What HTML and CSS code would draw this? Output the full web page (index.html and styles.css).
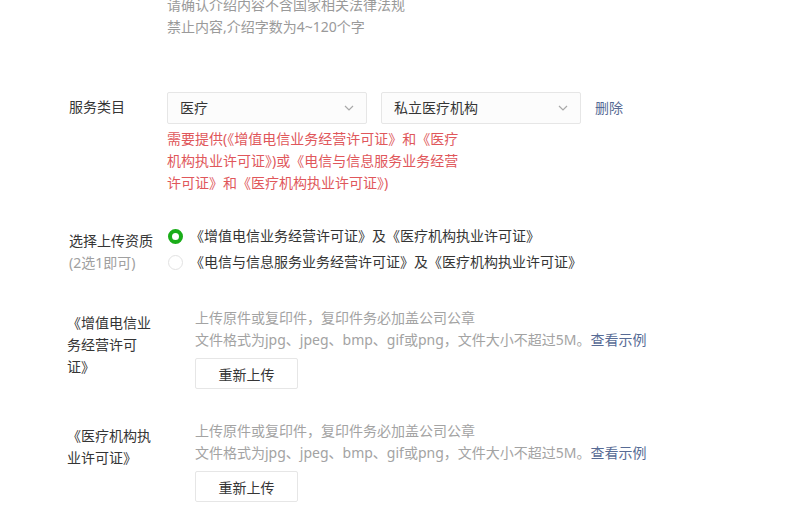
FILE: index.html
```html
<!DOCTYPE html>
<html lang="zh-CN">
  <head>
    <meta charset="UTF-8" />
    <title>服务类目设置</title>
    <link rel="stylesheet" href="styles.css">
  </head>
  <body>
    <div class="page">
      <div class="desc">
        <p>请确认介绍内容不含国家相关法律法规</p>
        <p>禁止内容,介绍字数为4~120个字</p>
      </div>

      <div class="row category">
        <div class="label">服务类目</div>
        <div class="field">
          <div class="selects">
            <div class="select">
              <span>医疗</span>
              <svg class="arrow" width="10" height="6" viewBox="0 0 10 6"><path d="M1 1l4 4 4-4" fill="none" stroke="#a9a9a9" stroke-width="1.2"/></svg>
            </div>
            <div class="select">
              <span>私立医疗机构</span>
              <svg class="arrow" width="10" height="6" viewBox="0 0 10 6"><path d="M1 1l4 4 4-4" fill="none" stroke="#a9a9a9" stroke-width="1.2"/></svg>
            </div>
            <a class="link">删除</a>
          </div>
          <p class="warn">需要提供(《增值电信业务经营许可证》和《医疗<br>机构执业许可证》)或《电信与信息服务业务经营<br>许可证》和《医疗机构执业许可证》)</p>
        </div>
      </div>

      <div class="row qualify">
        <div class="label">选择上传资质<br><span class="sub">(2选1即可)</span></div>
        <div class="field">
          <label class="radio checked"><i></i>《增值电信业务经营许可证》及《医疗机构执业许可证》</label>
          <label class="radio"><i></i>《电信与信息服务业务经营许可证》及《医疗机构执业许可证》</label>
        </div>
      </div>

      <div class="upload">
        <div class="upload-label">《增值电信业务经营许可证》</div>
        <div class="upload-body">
          <p class="hint">上传原件或复印件，复印件务必加盖公司公章</p>
          <p class="hint">文件格式为jpg、jpeg、bmp、gif或png，文件大小不超过5M。<a class="link">查看示例</a></p>
          <button class="btn">重新上传</button>
        </div>
      </div>

      <div class="upload">
        <div class="upload-label">《医疗机构执业许可证》</div>
        <div class="upload-body">
          <p class="hint">上传原件或复印件，复印件务必加盖公司公章</p>
          <p class="hint">文件格式为jpg、jpeg、bmp、gif或png，文件大小不超过5M。<a class="link">查看示例</a></p>
          <button class="btn">重新上传</button>
        </div>
      </div>
    </div>
  </body>
</html>
```

FILE: styles.css
```css
* {
  margin: 0;
  padding: 0;
  box-sizing: border-box;
}

body {
  font-family: "Noto Sans", "Noto Sans CJK SC", sans-serif;
  font-size: 14px;
  line-height: 22px;
  color: #353535;
  background: #fff;
  overflow: hidden;
}

.page {
  padding-left: 69px;
  margin-top: -6px;
}

.desc {
  padding-left: 98px;
  color: #9a9a9a;
}

.row {
  display: flex;
}

.label {
  width: 98px;
  flex-shrink: 0;
}

.category {
  margin-top: 54px;
}

.category .label {
  padding-top: 4px;
}

.selects {
  display: flex;
  align-items: center;
  gap: 14px;
}

.select {
  width: 200px;
  height: 32px;
  border: 1px solid #e6e6e6;
  border-radius: 2px;
  background: #fcfcfc;
  display: flex;
  align-items: center;
  justify-content: space-between;
  padding: 0 12px;
  color: #353535;
}

.link {
  color: #576b95;
  cursor: pointer;
}

.warn {
  margin-top: 4px;
  color: #e0575b;
}

.qualify {
  margin-top: 29px;
}

.qualify .label {
  padding-top: 7px;
}

.sub {
  color: #a0a0a0;
}

.radio {
  display: flex;
  align-items: center;
  height: 26px;
  gap: 7px;
  color: #353535;
}

.radio i {
  width: 15px;
  height: 15px;
  border-radius: 50%;
  border: 1px solid #e2e2e2;
  background: #fff;
  margin-left: 1px;
}

.radio.checked i {
  border: 4px solid #1aad19;
}

.upload {
  display: flex;
  margin-top: 32px;
}

.upload + .upload {
  margin-top: 31px;
}

.upload-label {
  width: 90px;
  margin-right: 38px;
  padding-top: 5px;
  margin-left: -2px;
}

.hint {
  color: #a3a3a3;
}

.btn {
  display: block;
  margin-top: 7px;
  width: 103px;
  height: 31px;
  border: 1px solid #e6e6e6;
  border-radius: 2px;
  background: #fff;
  font-family: inherit;
  font-size: 14px;
  color: #353535;
}
```
